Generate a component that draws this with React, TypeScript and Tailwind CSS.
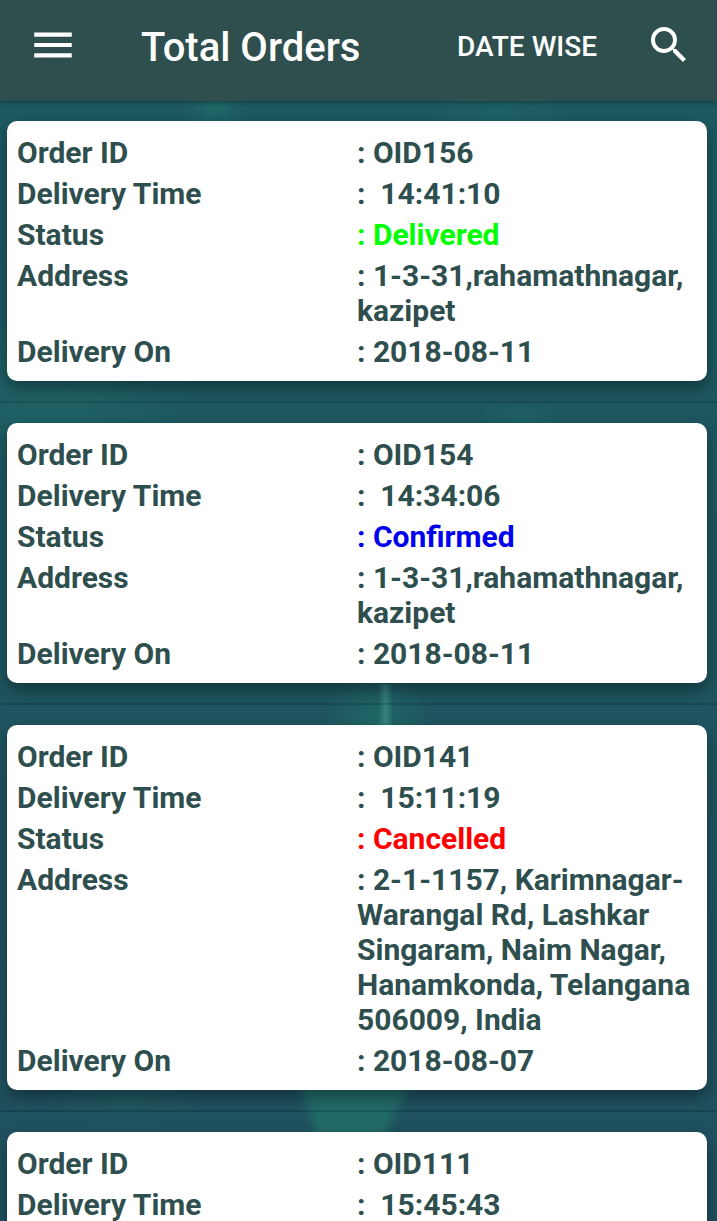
import { MdMenu, MdSearch } from 'react-icons/md';
import clsx from 'clsx';

type Status = 'Delivered' | 'Confirmed' | 'Cancelled';

interface Order {
  id: string;
  time: string;
  status?: Status;
  address?: string;
  date?: string;
}

const ORDERS: Order[] = [
  { id: 'OID156', time: '14:41:10', status: 'Delivered', address: '1-3-31,rahamathnagar, kazipet', date: '2018-08-11' },
  { id: 'OID154', time: '14:34:06', status: 'Confirmed', address: '1-3-31,rahamathnagar, kazipet', date: '2018-08-11' },
  {
    id: 'OID141',
    time: '15:11:19',
    status: 'Cancelled',
    address: '2-1-1157, Karimnagar-Warangal Rd, Lashkar Singaram, Naim Nagar, Hanamkonda, Telangana 506009, India',
    date: '2018-08-07',
  },
  { id: 'OID111', time: '15:45:43' },
];

const STATUS_COLORS: Record<Status, string> = {
  Delivered: 'text-[#00ff00]',
  Confirmed: 'text-[#0000ee]',
  Cancelled: 'text-[#ff0000]',
};

function Backdrop() {
  return (
    <svg
      className="absolute inset-0 size-full"
      viewBox="0 0 717 1221"
      preserveAspectRatio="xMidYMid slice"
      aria-hidden="true"
    >
      <defs>
        <radialGradient id="glow">
          <stop offset="0" stopColor="#20706b" stopOpacity="0.7" />
          <stop offset="1" stopColor="#20706b" stopOpacity="0" />
        </radialGradient>
        <linearGradient id="beam">
          <stop offset="0" stopColor="#3c8f88" stopOpacity="0" />
          <stop offset="0.5" stopColor="#3c8f88" stopOpacity="0.7" />
          <stop offset="1" stopColor="#3c8f88" stopOpacity="0" />
        </linearGradient>
        <linearGradient id="base" x1="0" y1="0" x2="0" y2="1">
          <stop offset="0" stopColor="#1c5a62" />
          <stop offset="0.5" stopColor="#1e5660" />
          <stop offset="1" stopColor="#20505f" />
        </linearGradient>
        <filter id="soft">
          <feGaussianBlur stdDeviation="5" />
        </filter>
      </defs>
      <rect width="717" height="1221" fill="url(#base)" />
      <ellipse cx="215" cy="108" rx="34" ry="20" fill="url(#glow)" />
      <ellipse cx="500" cy="112" rx="70" ry="22" fill="url(#glow)" opacity="0.6" />
      <ellipse cx="50" cy="395" rx="150" ry="90" fill="url(#glow)" opacity="0.7" />
      <ellipse cx="520" cy="420" rx="50" ry="22" fill="url(#glow)" opacity="0.5" />
      <ellipse cx="378" cy="722" rx="54" ry="50" fill="url(#glow)" />
      <rect x="378" y="684" width="15" height="42" fill="url(#beam)" />
      <ellipse cx="125" cy="1100" rx="80" ry="30" fill="url(#glow)" opacity="0.3" />
      <path d="M294 1070H416L378 1150H322Z" fill="#226b68" filter="url(#soft)" />
    </svg>
  );
}

function Row({ label, value, valueClass }: { label: string; value: string; valueClass?: string }) {
  return (
    <div className="grid grid-cols-2">
      <dt>{label}</dt>
      <dd className={clsx('whitespace-pre-wrap', valueClass)}>{`: ${value}`}</dd>
    </div>
  );
}

function OrderCard({ order }: { order: Order }) {
  return (
    <li className="border-b-2 border-black/15 py-5 pr-[10px] pl-[7px]">
      <dl className="flex flex-col gap-[6px] rounded-[10px] bg-white px-[10px] pt-[14px] pb-3 text-[30px] leading-[35px] font-bold text-[#2f4f4f] shadow-[0_7px_16px_rgba(0,0,0,0.38)]">
        <Row label="Order ID" value={order.id} />
        <Row label="Delivery Time" value={` ${order.time}`} />
        {order.status && <Row label="Status" value={order.status} valueClass={STATUS_COLORS[order.status]} />}
        {order.address && <Row label="Address" value={order.address} />}
        {order.date && <Row label="Delivery On" value={order.date} />}
      </dl>
    </li>
  );
}

export default function App() {
  return (
    <div className="relative flex h-screen flex-col overflow-hidden bg-[#1e5460] font-[Roboto,sans-serif]">
      <Backdrop />

      <header className="relative z-10 flex h-[101px] shrink-0 items-center bg-[#2f4f4f] pr-6 pb-3 pl-7 text-white shadow-[0_2px_5px_rgba(0,0,0,0.3)]">
        <button type="button" aria-label="Open menu">
          <MdMenu className="size-[50px]" />
        </button>
        <h1 className="ml-[63px] pt-1.5 text-[40px] leading-12 font-medium">Total Orders</h1>
        <button type="button" className="mr-12 ml-auto pt-1 text-[28px] leading-9 font-medium">
          DATE WISE
        </button>
        <button type="button" aria-label="Search orders">
          <MdSearch className="size-12" />
        </button>
      </header>

      <main className="relative min-h-0 flex-1 overflow-y-auto [scrollbar-width:none]">
        <ul>
          {ORDERS.map((order) => (
            <OrderCard key={order.id} order={order} />
          ))}
        </ul>
      </main>
    </div>
  );
}
